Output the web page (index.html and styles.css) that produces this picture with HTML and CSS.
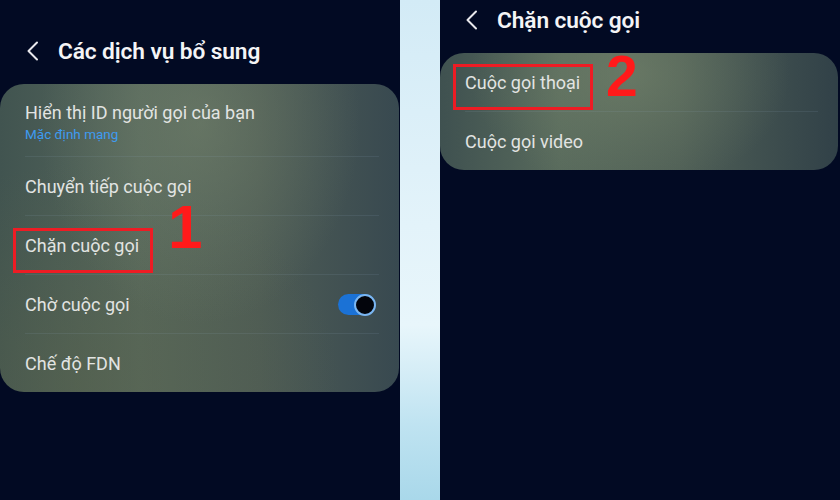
FILE: index.html
```html
<!DOCTYPE html>
<html lang="vi">
<head>
<meta charset="utf-8">
<link rel="stylesheet" href="styles.css">
</head>
<body>
<div class="page">
  <section class="panel panel-left">
    <header class="header header-left">
      <svg class="chev" width="14" height="20" viewBox="0 0 14 20"><path d="M11 1.5 L2.5 10 L11 18.5" fill="none" stroke="#e8e8ec" stroke-width="2" stroke-linecap="round" stroke-linejoin="round"/></svg>
      <h1 class="title">Các dịch vụ bổ sung</h1>
    </header>
    <div class="card card-left">
      <div class="row row-tall">
        <div class="label">Hiển thị ID người gọi của bạn</div>
        <div class="sub">Mặc định mạng</div>
      </div>
      <div class="row"><div class="label">Chuyển tiếp cuộc gọi</div></div>
      <div class="row">
        <div class="label">Chặn cuộc gọi</div>
        <span class="mark mark1"></span>
        <span class="num num1">1</span>
      </div>
      <div class="row row-toggle">
        <div class="label">Chờ cuộc gọi</div>
        <span class="toggle"><span class="knob"></span></span>
      </div>
      <div class="row last"><div class="label">Chế độ FDN</div></div>
    </div>
  </section>
  <div class="strip"></div>
  <section class="panel panel-right">
    <header class="header header-right">
      <svg class="chev" width="14" height="20" viewBox="0 0 14 20"><path d="M11 1.5 L2.5 10 L11 18.5" fill="none" stroke="#e8e8ec" stroke-width="2" stroke-linecap="round" stroke-linejoin="round"/></svg>
      <h1 class="title">Chặn cuộc gọi</h1>
    </header>
    <div class="card card-right">
      <div class="row">
        <div class="label">Cuộc gọi thoại</div>
        <span class="mark mark2"></span>
        <span class="num num2">2</span>
      </div>
      <div class="row last"><div class="label">Cuộc gọi video</div></div>
    </div>
  </section>
</div>
</body>
</html>
```
FILE: styles.css
```css
* { box-sizing: border-box; }
html, body { margin: 0; padding: 0; }
body {
  width: 840px;
  height: 500px;
  overflow: hidden;
  background: #030a22;
  font-family: Roboto, "Noto Sans", sans-serif;
}
.page {
  display: flex;
  width: 840px;
  height: 500px;
}
.panel {
  width: 400px;
  height: 500px;
  background: #020a23;
  display: flex;
  flex-direction: column;
}
.strip {
  width: 40px;
  height: 500px;
  background: linear-gradient(180deg, #d3ebf6 0%, #e3f3fa 45%, #e8f6fb 65%, #bfe3f1 85%, #a9d8ea 100%);
}
.header {
  display: flex;
  align-items: center;
}
.header-left {
  height: 84px;
  padding: 18px 0 0 26px;
}
.header-right {
  height: 53px;
  padding: 0 0 13px 25px;
}
.chev { flex: none; }
.title {
  margin: 0 0 0 18px;
  color: #f4f4f6;
  font-size: 22.7px;
  font-weight: 600;
  letter-spacing: -0.1px;
}
.card {
  border-radius: 24px;
}
.card-left {
  width: 399px;
  height: 308px;
  background:
    radial-gradient(ellipse 160px 200px at 200px 40px, rgba(120,135,110,0.5), rgba(120,135,110,0) 100%),
    radial-gradient(ellipse 260px 220px at 80px 300px, rgba(90,100,75,0.5), rgba(90,100,75,0) 100%),
    linear-gradient(90deg, #415450 0%, #56675c 35%, #4e5c55 65%, #384950 100%);
}
.card-right {
  width: 398px;
  height: 117px;
  background:
    radial-gradient(ellipse 160px 120px at 190px 20px, rgba(125,140,112,0.5), rgba(125,140,112,0) 100%),
    linear-gradient(90deg, #3f5150 0%, #586a5c 30%, #4f5f56 60%, #314148 100%);
}
.row {
  position: relative;
  height: 59px;
  padding: 0 25px;
  display: flex;
  flex-direction: column;
  justify-content: center;
}
.row::after {
  content: "";
  position: absolute;
  left: 25px;
  right: 20px;
  bottom: 0;
  height: 1px;
  background: rgba(150,175,200,0.12);
}
.row.last::after { display: none; }
.row-tall {
  height: 73px;
  padding-top: 4px;
}
.row-toggle {
  flex-direction: row;
  align-items: center;
  justify-content: space-between;
}
.label {
  color: #e2e4e2;
  font-size: 18px;
  line-height: 22px;
}
.sub {
  color: #3e9bf0;
  font-size: 13.5px;
  line-height: 18px;
  margin-top: 1px;
}
.mark {
  position: absolute;
  border: 3px solid #ee1c24;
}
.mark1 {
  left: 13px;
  top: 12px;
  width: 140px;
  height: 45px;
}
.mark2 {
  left: 13px;
  top: 11px;
  width: 140px;
  height: 46px;
}
.num {
  position: absolute;
  color: #ff1a1a;
  font-family: "Liberation Sans", Arial, sans-serif;
  font-weight: 700;
  line-height: 1;
}
.num1 {
  left: 168px;
  top: -20px;
  font-size: 62px;
}
.num2 {
  left: 166px;
  top: -5px;
  font-size: 57px;
}
.toggle {
  position: relative;
  width: 37px;
  height: 21px;
  border-radius: 11px;
  background: #1b72d6;
  margin-right: -1px;
}
.knob {
  position: absolute;
  right: -1px;
  top: -0.5px;
  width: 22px;
  height: 22px;
  border-radius: 50%;
  background: #03050c;
  border: 2px solid #7ab6f2;
}
```
